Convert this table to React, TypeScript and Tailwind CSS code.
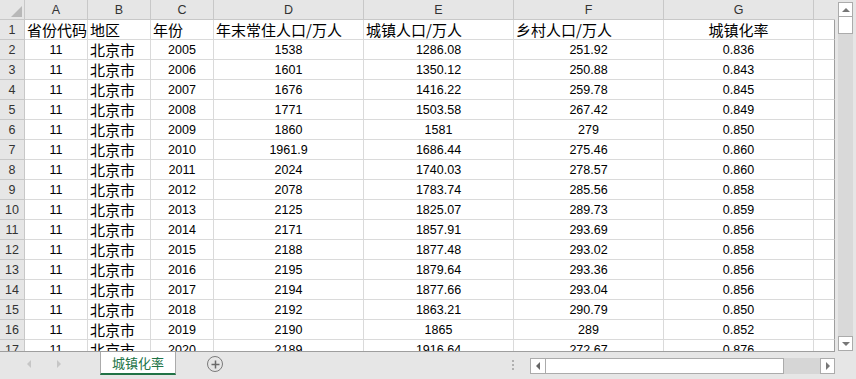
const rows = [
  ['2005', '1538', '1286.08', '251.92', '0.836'],
  ['2006', '1601', '1350.12', '250.88', '0.843'],
  ['2007', '1676', '1416.22', '259.78', '0.845'],
  ['2008', '1771', '1503.58', '267.42', '0.849'],
  ['2009', '1860', '1581', '279', '0.850'],
  ['2010', '1961.9', '1686.44', '275.46', '0.860'],
  ['2011', '2024', '1740.03', '278.57', '0.860'],
  ['2012', '2078', '1783.74', '285.56', '0.858'],
  ['2013', '2125', '1825.07', '289.73', '0.859'],
  ['2014', '2171', '1857.91', '293.69', '0.856'],
  ['2015', '2188', '1877.48', '293.02', '0.858'],
  ['2016', '2195', '1879.64', '293.36', '0.856'],
  ['2017', '2194', '1877.66', '293.04', '0.856'],
  ['2018', '2192', '1863.21', '290.79', '0.850'],
  ['2019', '2190', '1865', '289', '0.852'],
  ['2020', '2189', '1916.64', '272.67', '0.876'],
];

const cols = 'grid grid-cols-[25px_63px_63px_63px_150px_150px_150px_150px_21px]';
const num = "font-['Liberation_Sans',sans-serif] text-[12.5px]";
const cjk = "font-['Noto_Sans_CJK_SC',sans-serif] text-[15px]";
const cell = 'h-5 leading-[20px] border-r border-b border-[#dadada] bg-white text-black whitespace-nowrap overflow-hidden';
const hdr = 'h-5 leading-[20px] bg-[#e6e6e6] border-r border-b border-[#c8c8c8] text-[#333] text-center';

function Arrow({ dir, color = '#777' }: { dir: 'up' | 'down' | 'left' | 'right'; color?: string }) {
  const pts = {
    up: '0,5 4,1 8,5',
    down: '0,1 8,1 4,5',
    left: '5,0 5,8 1,4',
    right: '1,0 1,8 5,4',
  }[dir];
  const vert = dir === 'up' || dir === 'down';
  return (
    <svg width={vert ? 8 : 6} height={vert ? 6 : 8} viewBox={vert ? '0 0 8 6' : '0 0 6 8'}>
      <polygon points={pts} fill={color} />
    </svg>
  );
}

function Grid() {
  return (
    <div className="w-[835px] h-[352px] overflow-hidden border-b border-[#9e9e9e]">
      <div className={cols}>
        <div className={`${hdr} relative`}>
          <svg className="absolute left-0 top-0" width="25" height="20">
            <polygon points="22,6 22,17 11,17" fill="#b8b8b8" />
          </svg>
        </div>
        {['A', 'B', 'C', 'D', 'E', 'F', 'G'].map((l) => (
          <div key={l} className={`${hdr} ${num}`}>{l}</div>
        ))}
        <div className="h-5 bg-[#e6e6e6] border-b border-[#c8c8c8]" />

        <div className={`${hdr} ${num}`}>1</div>
        <div className={`${cell} ${cjk} pl-[2px]`}>省份代码</div>
        <div className={`${cell} ${cjk} pl-[2px]`}>地区</div>
        <div className={`${cell} ${cjk} pl-[2px]`}>年份</div>
        <div className={`${cell} ${cjk} pl-[2px]`}>年末常住人口/万人</div>
        <div className={`${cell} ${cjk} pl-[2px]`}>城镇人口/万人</div>
        <div className={`${cell} ${cjk} pl-[2px]`}>乡村人口/万人</div>
        <div className={`${cell} ${cjk} text-center`}>城镇化率</div>
        <div className={`${cell} border-r-[#9e9e9e]`} />

        {rows.map((r, i) => (
          <div key={r[0]} className="contents">
            <div className={`${hdr} ${num}`}>{i + 2}</div>
            <div className={`${cell} ${num} text-center`}>11</div>
            <div className={`${cell} ${cjk} pl-[2px]`}>北京市</div>
            {r.map((v, j) => (
              <div key={j} className={`${cell} ${num} text-center`}>{v}</div>
            ))}
            <div className={`${cell} border-r-[#9e9e9e]`} />
          </div>
        ))}
      </div>
    </div>
  );
}

function VScroll() {
  return (
    <div className="w-[21px] h-[352px] bg-[#e6e6e6] pl-[3px] pt-[2px] pb-[1px] flex flex-col">
      <div className="w-[15px] h-[15px] bg-white border border-[#ababab] flex items-center justify-center">
        <Arrow dir="up" />
      </div>
      <div className="w-[15px] h-[17px] bg-white border border-[#ababab] border-t-0" />
      <div className="w-[15px] flex-1 bg-[#d9d9d9]" />
      <div className="w-[15px] h-[15px] bg-white border border-[#ababab] flex items-center justify-center">
        <Arrow dir="down" />
      </div>
    </div>
  );
}

function TabBar() {
  return (
    <div className="h-[27px] bg-[#e6e6e6] flex items-start">
      <div className="w-[100px] h-[24px] flex items-center">
        <span className="ml-[26px]"><Arrow dir="left" color="#c6c6c6" /></span>
        <span className="ml-[24px]"><Arrow dir="right" color="#c6c6c6" /></span>
      </div>
      <div className="w-[76px] h-[23px] bg-white border-x border-[#ababab] border-b-2 border-b-[#217346] flex items-center justify-center text-[#217346] font-['Noto_Sans_CJK_SC',sans-serif] text-[13px] leading-none">
        城镇化率
      </div>
      <div className="ml-[31px] mt-[4px] w-4 h-4 rounded-full border-[1.5px] border-[#7a7a7a] flex items-center justify-center">
        <svg width="9" height="9" viewBox="0 0 9 9">
          <path d="M4.5 0.5v8M0.5 4.5h8" stroke="#6a6a6a" strokeWidth="1.5" />
        </svg>
      </div>
      <div className="flex-1" />
      <div className="mt-[8px] w-[2px] flex flex-col gap-[2px]">
        <div className="w-[2px] h-[2px] bg-[#b0b0b0]" />
        <div className="w-[2px] h-[2px] bg-[#b0b0b0]" />
        <div className="w-[2px] h-[2px] bg-[#b0b0b0]" />
      </div>
      <div className="ml-[16px] mt-[6px] w-[305px] h-4 flex">
        <div className="w-[254px] h-4 bg-white border border-[#ababab] flex">
          <div className="w-[15px] h-full border-r border-[#ababab] flex items-center justify-center">
            <Arrow dir="left" color="#666" />
          </div>
        </div>
        <div className="flex-1 bg-[#d6d6d6]" />
        <div className="w-[15px] h-4 bg-white border border-[#ababab] flex items-center justify-center">
          <Arrow dir="right" color="#777" />
        </div>
      </div>
      <div className="w-[21px]" />
    </div>
  );
}

export default function App() {
  return (
    <div className="w-[856px] h-[379px] bg-[#e6e6e6] overflow-hidden flex flex-col">
      <div className="flex">
        <Grid />
        <VScroll />
      </div>
      <TabBar />
    </div>
  );
}
